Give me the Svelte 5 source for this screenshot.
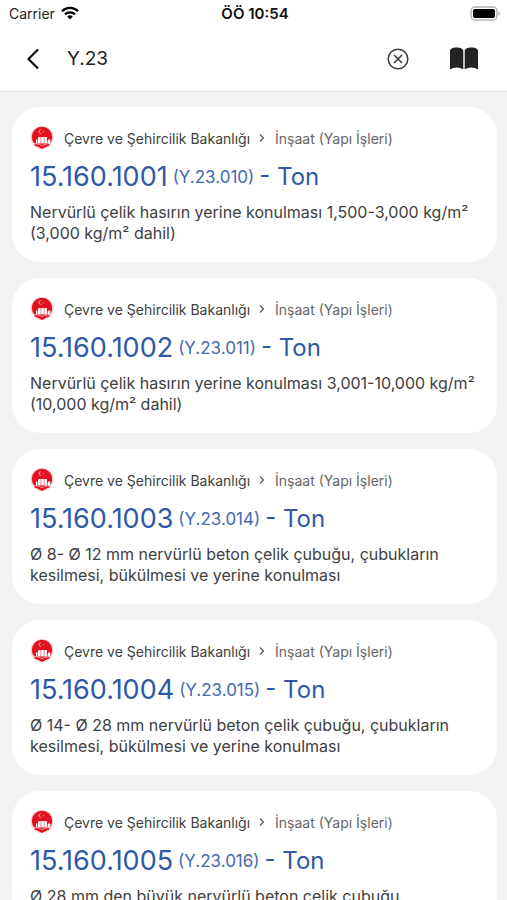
<script lang="ts">
  type Item = { code: string; oldCode: string; unit: string; text: string };

  let query = $state('Y.23');

  const items: Item[] = [
    {
      code: '15.160.1001',
      oldCode: 'Y.23.010',
      unit: 'Ton',
      text: 'Nervürlü çelik hasırın yerine konulması 1,500-3,000 kg/m² (3,000 kg/m² dahil)',
    },
    {
      code: '15.160.1002',
      oldCode: 'Y.23.011',
      unit: 'Ton',
      text: 'Nervürlü çelik hasırın yerine konulması 3,001-10,000 kg/m² (10,000 kg/m² dahil)',
    },
    {
      code: '15.160.1003',
      oldCode: 'Y.23.014',
      unit: 'Ton',
      text: 'Ø 8- Ø 12 mm nervürlü beton çelik çubuğu, çubukların kesilmesi, bükülmesi ve yerine konulması',
    },
    {
      code: '15.160.1004',
      oldCode: 'Y.23.015',
      unit: 'Ton',
      text: 'Ø 14- Ø 28 mm nervürlü beton çelik çubuğu, çubukların kesilmesi, bükülmesi ve yerine konulması',
    },
    {
      code: '15.160.1005',
      oldCode: 'Y.23.016',
      unit: 'Ton',
      text: 'Ø 28 mm den büyük nervürlü beton çelik çubuğu,',
    },
  ];
</script>

{#snippet emblem()}
  <svg class="emblem" viewBox="0 0 24 24" aria-hidden="true">
    <circle cx="12" cy="11.5" r="11.5" fill="#fbd3d6" />
    <circle cx="12" cy="11" r="10.2" fill="#e3101f" />
    <path d="M12 3.4a2.4 2.4 0 1 0 0 4.2 2 2 0 1 1 0-4.2z" fill="#f5868d" />
    <path d="M13.4 4.6l.4.6.7.1-.5.5.1.7-.7-.3-.6.3.1-.7-.5-.5.7-.1z" fill="#f5868d" />
    <path
      d="M6 17.500v-4h1.400v4zM8 17.500v-5.800l1-.7h1.700v6.500zM11.200 17.500V11h2.600v6.500zM14.300 17.500V11h2.600v6.500zM17.600 17.500v-3l1.500-1.400 1.500 1.400-.8 3z"
      fill="#fff"
    />
    <path d="M1.500 17.800c4-.4 7.500.2 10.500 1.800 3-1.600 6.500-2.200 10.500-1.800" fill="none" stroke="#fff" stroke-width=".6" />
    <path d="M3.400 18.800c3.200-.3 6 .2 8.600 1.600 2.600-1.400 5.400-1.900 8.600-1.600-2.400 1.300-5.600 2.200-8.600 4.200-3-2-6.200-2.900-8.600-4.200z" fill="#e3101f" />
  </svg>
{/snippet}

<div class="screen">
  <div class="status">
    <div class="carrier">
      <span>Carrier</span>
      <svg width="18" height="14" viewBox="0 0 18 14" aria-hidden="true">
        <g fill="none" stroke="#000" stroke-width="2.3">
          <path d="M1 5.2a11.4 11.4 0 0 1 16 0" />
          <path d="M4 8.4a7.2 7.2 0 0 1 10 0" />
        </g>
        <path d="M6.2 10.6a4 4 0 0 1 5.6 0L9 13.5z" />
      </svg>
    </div>
    <span class="time">ÖÖ 10:54</span>
    <div class="battery">
      <svg width="31" height="15" viewBox="0 0 31 15" aria-hidden="true">
        <rect x="1" y="1" width="26" height="13" rx="4" fill="#fff" stroke="#b5b5b5" stroke-width="1.5" />
        <rect x="3" y="3" width="22" height="9" rx="2" />
        <path d="M28.5 5.2c2 .9 2 3.7 0 4.6z" fill="#b5b5b5" />
      </svg>
    </div>
  </div>

  <header class="toolbar">
    <button type="button" class="back" aria-label="Geri">
      <svg width="14" height="22" viewBox="0 0 14 22" aria-hidden="true">
        <path d="M12 1.5L2.500 11l9.500 9.500" fill="none" stroke="#111" stroke-width="2.2" />
      </svg>
    </button>
    <input type="text" class="search" aria-label="Poz ara" bind:value={query} />
    <button type="button" class="clear" aria-label="Temizle" onclick={() => (query = '')}>
      <svg width="22" height="22" viewBox="0 0 22 22" fill="none" stroke="#3c3c3c" aria-hidden="true">
        <circle cx="11" cy="11" r="9.800" stroke-width="1.5" />
        <path d="M7 7l8 8M15 7l-8 8" stroke-width="1.6" />
      </svg>
    </button>
    <button type="button" class="book" aria-label="Kitaplar">
      <svg width="28" height="23" viewBox="0 0 28 23" fill="#222" aria-hidden="true">
        <path d="M0 22.500V4C0 1.800 2.700.5 6.600.5S13.300 1.800 13.300 4v18.500c-3.500-2.800-9.800-2.800-13.300 0z" />
        <path d="M14.700 22.500V4c0-2.200 2.700-3.500 6.700-3.500S28 1.800 28 4v18.500c-3.500-2.800-9.800-2.800-13.300 0z" />
      </svg>
    </button>
  </header>

  <main class="list">
    {#each items as item (item.code)}
      <article class="card">
        <div class="path">
          {@render emblem()}
          <span class="source">Çevre ve Şehircilik Bakanlığı</span>
          <svg class="chevron" width="6" height="8" viewBox="0 0 6 8" aria-hidden="true">
            <path d="M1 .5L4.500 4 1 7.500" fill="none" stroke="#555" stroke-width="1.2" />
          </svg>
          <span class="group">İnşaat (Yapı İşleri)</span>
        </div>
        <h2>
          <span class="code">{item.code}</span>
          <small>({item.oldCode})</small>
          <span>- {item.unit}</span>
        </h2>
        <p>{item.text}</p>
      </article>
    {/each}
  </main>
</div>

<style>
  :global(body) {
    background: #f3f3f3;
  }
  .screen {
    display: flex;
    flex-direction: column;
    height: 100vh;
    overflow: hidden;
    font-family: Inter, 'Liberation Sans', sans-serif;
    color: #404040;
  }

  .status {
    display: grid;
    grid-template-columns: 1fr auto 1fr;
    align-items: center;
    flex: none;
    height: 26px;
    padding: 0 6px 0 9px;
    background: #fff;
    font-size: 14px;
    color: #222;
  }
  .carrier {
    display: flex;
    align-items: center;
    gap: 6px;
  }
  .time {
    font-size: 15px;
    font-weight: 600;
    color: #111;
  }
  .battery {
    display: flex;
    justify-content: flex-end;
  }

  .toolbar {
    display: flex;
    align-items: center;
    flex: none;
    height: 65px;
    padding: 0 29px 0 22px;
    border-bottom: 1px solid #dedede;
    background: #fff;
  }
  button {
    display: flex;
    align-items: center;
    justify-content: center;
    height: 44px;
    padding: 0;
    border: 0;
    background: none;
    cursor: pointer;
  }
  .back {
    width: 22px;
  }
  .search {
    flex: 1;
    min-width: 0;
    height: 44px;
    margin-left: 23px;
    padding: 0;
    border: 0;
    outline: 0;
    background: none;
    font: inherit;
    font-size: 19px;
    color: #222;
  }
  .clear {
    width: 44px;
  }
  .book {
    width: 28px;
    margin-left: 30px;
  }

  .list {
    display: flex;
    flex-direction: column;
    gap: 16px;
    flex: 1;
    min-height: 0;
    padding: 15px 10px 0 12px;
    overflow-y: auto;
    scrollbar-width: none;
  }
  .card {
    flex: none;
    padding: 19px 18px 18px;
    border-radius: 28px;
    background: #fff;
  }
  .path {
    display: flex;
    align-items: center;
    height: 24px;
    font-size: 14px;
    white-space: nowrap;
  }
  .emblem {
    width: 24px;
    height: 24px;
    margin-right: 10px;
  }
  .chevron {
    margin: 0 10px 0 9px;
  }
  .group {
    color: #666;
  }
  h2 {
    display: flex;
    align-items: center;
    gap: 5px;
    margin: 11px 0 9px;
    font-size: 24px;
    font-weight: 400;
    line-height: 32px;
    color: #2f59a6;
  }
  .code {
    font-size: 27px;
  }
  small {
    font-size: 17px;
    color: #4469ad;
  }
  p {
    margin: 0;
    font-size: 16px;
    line-height: 21px;
  }
</style>
